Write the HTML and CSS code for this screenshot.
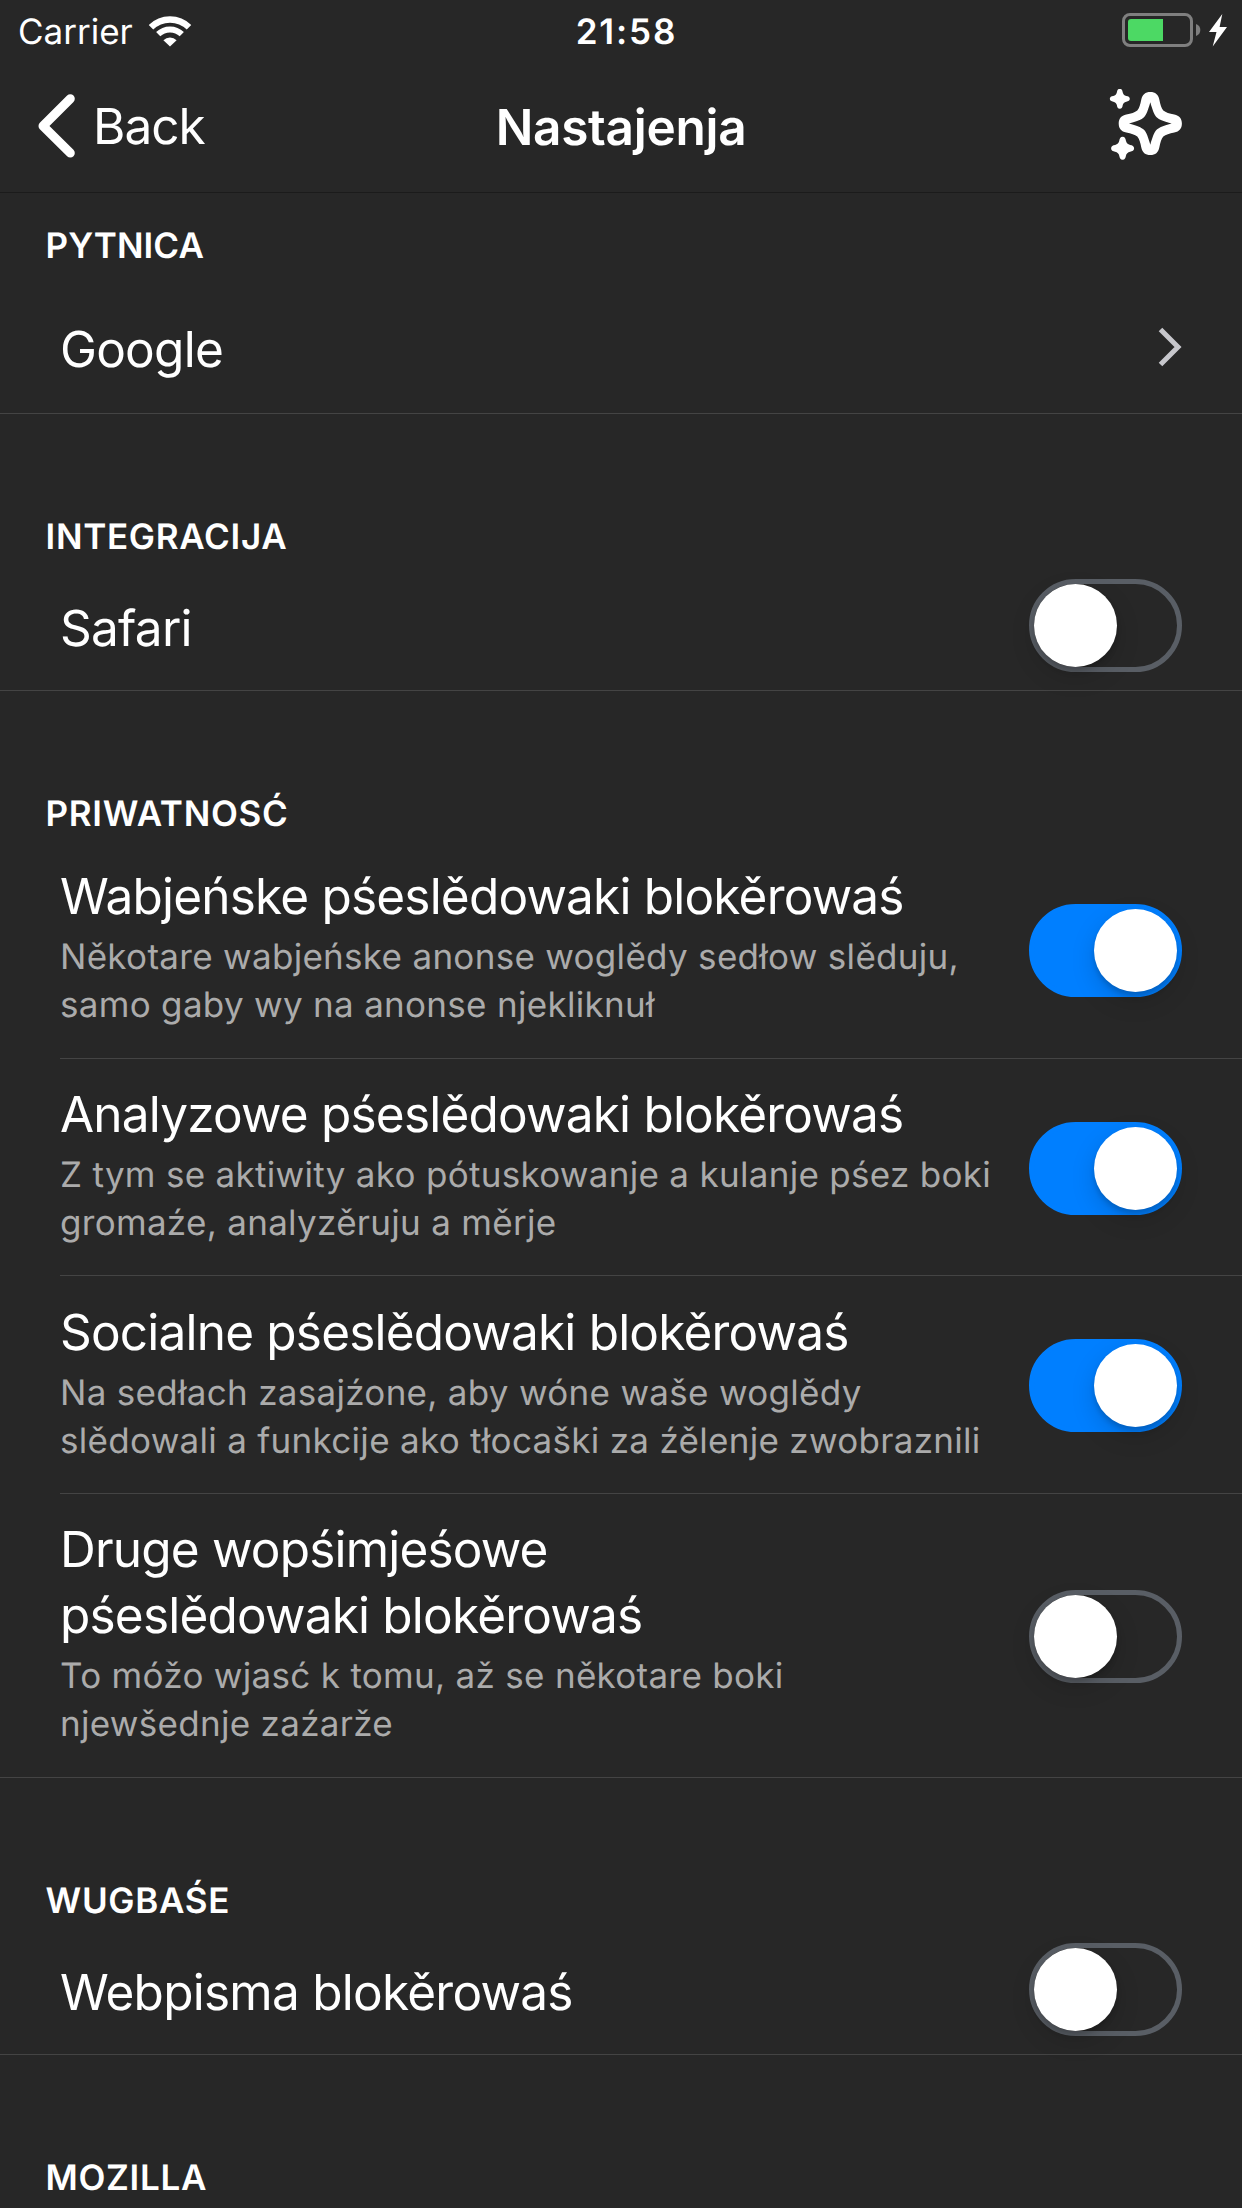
FILE: index.html
```html
<!DOCTYPE html>
<html lang="dsb">
<head>
<meta charset="utf-8">
<title>Nastajenja</title>
<link rel="stylesheet" href="styles.css">
</head>
<body>
<header class="top">
  <div class="status">
    <div class="status-left">
      <span class="carrier">Carrier</span>
      <svg class="wifi" width="44" height="32" viewBox="0 0 44 32">
        <g fill="none" stroke="#fff">
          <path d="M3 11.3A27 27 0 0 1 41 11.3" stroke-width="6.4"/>
          <path d="M10.2 18.200A17 17 0 0 1 33.8 18.200" stroke-width="6"/>
        </g>
        <path d="M22 30.600L15.400 24.200A9.500 9.500 0 0 1 28.600 24.200Z" fill="#fff"/>
      </svg>
    </div>
    <span class="clock">21:58</span>
    <svg class="battery" width="106" height="34" viewBox="0 0 106 34">
      <rect x="1.5" y="1.5" width="68" height="31" rx="6.5" fill="none" stroke="#7f7f7f" stroke-width="3"/>
      <path d="M9 6H41V28H9A3 3 0 0 1 6 25V9A3 3 0 0 1 9 6Z" fill="#4cd964"/>
      <path d="M74 11A7 6.5 0 0 1 74 23Z" fill="#7f7f7f"/>
      <path d="M100.3 1L87 19H94.5L90.7 33.5L105 14H97.6Z" fill="#fff"/>
    </svg>
  </div>
  <nav class="nav">
    <a class="back">
      <svg width="38" height="64" viewBox="0 0 38 64"><path d="M32.3 4.7L5 32L32.3 59" fill="none" stroke="#fff" stroke-width="9" stroke-linecap="round" stroke-linejoin="round"/></svg>
      <span>Back</span>
    </a>
    <h1 class="title">Nastajenja</h1>
    <svg class="sparkle" width="74" height="74" viewBox="0 0 74 74" fill="#fff">
      <defs>
        <path id="star" d="M0 -10C2 -10 2.600 -8.500 2.900 -6.500C3.300 -4.500 4.500 -3.300 6.500 -2.900C8.500 -2.600 10 -2 10 0C10 2 8.500 2.600 6.500 2.900C4.500 3.300 3.300 4.500 2.900 6.500C2.600 8.500 2 10 0 10C-2 10 -2.600 8.500 -2.900 6.500C-3.300 4.500 -4.500 3.300 -6.500 2.900C-8.500 2.600 -10 2 -10 0C-10 -2 -8.500 -2.600 -6.500 -2.900C-4.500 -3.300 -3.300 -4.500 -2.900 -6.500C-2.600 -8.500 -2 -10 0 -10Z"/>
      </defs>
      <path transform="translate(41.3 34.5)" fill-rule="evenodd" d="M0 -31.600C5 -31.600 8 -29 9 -24C10 -19 11 -15.500 13 -13C15.500 -11 19 -10 24 -9C29 -8 31.600 -5 31.600 0C31.600 5 29 8 24 9C19 10 15.500 11 13 13C11 15.500 10 19 9 24C8 29 5 31.600 0 31.600C-5 31.600 -8 29 -9 24C-10 19 -11 15.500 -13 13C-15.500 11 -19 10 -24 9C-29 8 -31.600 5 -31.600 0C-31.600 -5 -29 -8 -24 -9C-19 -10 -15.500 -11 -13 -13C-11 -15.500 -10 -19 -9 -24C-8 -29 -5 -31.600 0 -31.600ZM0 -21.300C2 -14 4 -8.500 6.300 -6.300C8.500 -4 14 -2 21.300 0C14 2 8.500 4 6.300 6.300C4 8.500 2 14 0 21.300C-2 14 -4 8.500 -6.300 6.300C-8.500 4 -14 2 -21.300 0C-14 -2 -8.500 -4 -6.300 -6.300C-4 -8.500 -2 -14 0 -21.300Z"/>
      <use href="#star" transform="translate(10.8 9.8)"/>
      <use href="#star" transform="translate(13.6 59.300) scale(1.150)"/>
    </svg>
  </nav>
</header>
<main>
  <section class="group">
    <h2 class="heading heading-first">PYTNICA</h2>
    <div class="row row-link">
      <div class="label">Google</div>
      <svg class="chevron" width="24" height="40" viewBox="0 0 24 40"><path d="M2.500 2.500L20 20L2.500 37.500" fill="none" stroke="#c7c7cc" stroke-width="5"/></svg>
    </div>
  </section>
  <section class="group">
    <h2 class="heading">INTEGRACIJA</h2>
    <div class="row">
      <div class="label">Safari</div>
      <span class="switch"></span>
    </div>
  </section>
  <section class="group">
    <h2 class="heading heading-tall">PRIWATNOSĆ</h2>
    <div class="item">
      <div class="text"><div class="name">Wabjeńske pśeslědowaki blokěrowaś</div><p class="note">Někotare wabjeńske anonse woglědy sedłow slěduju,<br>samo gaby wy na anonse njekliknuł</p></div>
      <span class="switch on"></span>
    </div>
    <div class="item">
      <div class="text"><div class="name">Analyzowe pśeslědowaki blokěrowaś</div><p class="note">Z tym se aktiwity ako pótuskowanje a kulanje pśez boki<br>gromaźe, analyzěruju a měrje</p></div>
      <span class="switch on"></span>
    </div>
    <div class="item">
      <div class="text"><div class="name">Socialne pśeslědowaki blokěrowaś</div><p class="note">Na sedłach zasajźone, aby wóne waše woglědy<br>slědowali a funkcije ako tłocaški za źělenje zwobraznili</p></div>
      <span class="switch on"></span>
    </div>
    <div class="item item-last">
      <div class="text"><div class="name">Druge wopśimjeśowe<br>pśeslědowaki blokěrowaś</div><p class="note">To móžo wjasć k tomu, až se někotare boki<br>njewšednje zaźarže</p></div>
      <span class="switch"></span>
    </div>
  </section>
  <section class="group">
    <h2 class="heading">WUGBAŚE</h2>
    <div class="row">
      <div class="label">Webpisma blokěrowaś</div>
      <span class="switch"></span>
    </div>
  </section>
  <section class="group">
    <h2 class="heading">MOZILLA</h2>
  </section>
</main>
</body>
</html>
```
FILE: styles.css
```css
* { box-sizing: border-box; margin: 0; padding: 0; }
body {
  width: 1242px;
  height: 2208px;
  overflow: hidden;
  background: #272727;
  color: #fff;
  font: 400 49.5px/66px Inter, "Liberation Sans", sans-serif;
  white-space: nowrap;
  text-rendering: geometricPrecision;
}
svg { display: block; flex: none; }

.top { height: 193px; border-bottom: 1px solid #1b1b1b; }
.status {
  display: grid;
  grid-template-columns: 1fr auto 1fr;
  align-items: center;
  height: 60px;
  padding: 2px 14px 0 18px;
  font-size: 35px;
  line-height: 48px;
}
.status-left { display: flex; align-items: center; gap: 15px; padding-top: 1px; }
.clock { font-weight: 600; letter-spacing: 1.9px; padding: 2px 0 0 7px; }
.battery { justify-self: end; margin-bottom: 2px; }

.nav {
  display: grid;
  grid-template-columns: 1fr auto 1fr;
  align-items: center;
  height: 132px;
  padding: 0 59px 0 38px;
}
.back { display: flex; align-items: center; gap: 17px; letter-spacing: -1px; }
.title { font-size: 49.5px; font-weight: 600; letter-spacing: -.25px; padding: 2px 0 0 21px; }
.sparkle { justify-self: end; }

.heading {
  height: 145px;
  padding: 99px 0 0 45.5px;
  font-size: 35px;
  font-weight: 600;
  line-height: 48px;
  letter-spacing: .7px;
}
.heading-first { height: 89px; padding-top: 29px; letter-spacing: .1px; }
.heading-tall { height: 150px; }

.row {
  display: flex;
  align-items: center;
  justify-content: space-between;
  height: 132px;
  padding: 0 60px;
  border-bottom: 1px solid #444;
}
.label { letter-spacing: -.75px; padding-top: 7px; }
.row-link .label { padding-top: 2px; }
.row-link .chevron { margin-bottom: 2px; }

.item {
  display: flex;
  align-items: center;
  justify-content: space-between;
  height: 217.7px;
  margin-left: 60px;
  padding-right: 60px;
  border-bottom: 1px solid #444;
}
.item-last { height: 283.7px; margin-left: 0; padding-left: 60px; }
.text { padding-bottom: 6px; }
.name { letter-spacing: -.8px; }
.note {
  margin-top: 4px;
  color: #ababab;
  font-size: 35px;
  line-height: 48px;
  letter-spacing: .3px;
}

.switch {
  flex: none;
  display: flex;
  width: 153px;
  height: 93px;
  margin-top: 2px;
  border: 5px solid #595e65;
  border-radius: 47px;
}
.switch::before {
  content: "";
  width: 83px;
  height: 83px;
  border-radius: 50%;
  background: #fff;
  box-shadow: 0 9px 24px rgba(0, 0, 0, .15), 0 4px 5px rgba(0, 0, 0, .15);
}
.on { justify-content: flex-end; background: #007fff; border-color: #007fff; }
```
